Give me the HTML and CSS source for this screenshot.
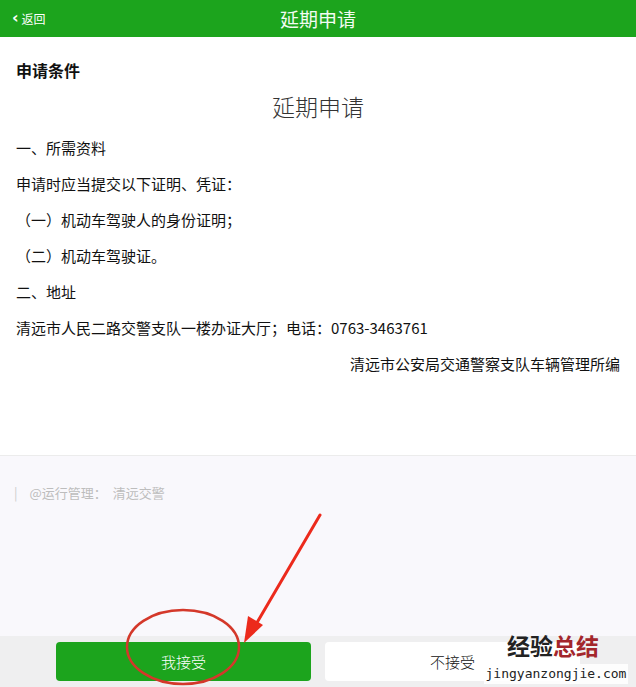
FILE: index.html
```html
<!DOCTYPE html>
<html lang="zh-CN">
<head>
<meta charset="utf-8">
<title>延期申请</title>
<link rel="stylesheet" href="styles.css">
</head>
<body>
<div class="page">
  <header class="topbar">
    <a class="back"><span class="chev">‹</span>返回</a>
    <h1 class="topbar-title">延期申请</h1>
  </header>
  <main class="article">
    <h2 class="section-title">申请条件</h2>
    <h3 class="doc-title">延期申请</h3>
    <p class="line">一、所需资料</p>
    <p class="line">申请时应当提交以下证明、凭证：</p>
    <p class="line">（一）机动车驾驶人的身份证明；</p>
    <p class="line">（二）机动车驾驶证。</p>
    <p class="line">二、地址</p>
    <p class="line">清远市人民二路交警支队一楼办证大厅；电话：0763-3463761</p>
    <p class="line right">清远市公安局交通警察支队车辆管理所编</p>
  </main>
  <section class="meta">
    <span class="bar">|</span><span class="meta-label">@运行管理：</span><span class="meta-name">清远交警</span>
  </section>
  <footer class="actions">
    <button class="btn btn-primary">我接受</button>
    <button class="btn btn-plain">不接受</button>
  </footer>

  <svg class="annot" width="636" height="687" viewBox="0 0 636 687">
    <ellipse cx="183" cy="647" rx="56" ry="37" fill="none" stroke="#d4382a" stroke-width="2.5"/>
    <line x1="320" y1="515" x2="255" y2="626" stroke="#ec2a1c" stroke-width="3" stroke-linecap="round"/>
    <polygon points="244,643 248,616 263,625" fill="#ec2a1c"/>
  </svg>

  <div class="watermark">
    <div class="wm-cn"><span class="wm-dark">经验</span><span class="wm-red">总结</span></div>
    <div class="wm-en">jingyanzongjie.com</div>
  </div>
</div>
</body>
</html>
```

FILE: styles.css
```css
* { box-sizing: border-box; }
html, body { margin: 0; padding: 0; }
body {
  width: 636px;
  height: 687px;
  overflow: hidden;
  font-family: "Noto Sans CJK SC", "Liberation Sans", sans-serif;
  color: #222;
  background: #fff;
}
.page {
  position: relative;
  width: 636px;
  height: 687px;
  display: flex;
  flex-direction: column;
}
.topbar {
  height: 37px;
  background: #1ca41d;
  display: flex;
  align-items: center;
  justify-content: center;
  position: relative;
}
.back {
  position: absolute;
  left: 12px;
  top: 0;
  height: 37px;
  display: flex;
  align-items: center;
  color: #fff;
  font-size: 12px;
  gap: 3px;
}
.chev { font-size: 16px; line-height: 1; margin-top: -2px; font-family: "DejaVu Sans", sans-serif; font-weight: bold; }
.topbar-title {
  margin: 0;
  color: #f2fbf2;
  font-size: 19px;
  font-weight: normal;
}
.article {
  height: 419px;
  padding: 23px 16px 0 16px;
  border-bottom: 1px solid #ececec;
}
.section-title {
  margin: 0;
  font-size: 16px;
  line-height: 20px;
  font-weight: bold;
  color: #111;
}
.doc-title {
  margin: 11px 0 0;
  text-align: center;
  font-size: 23px;
  line-height: 30px;
  font-weight: 300;
  color: #333;
}
.line {
  margin: 16px 0 0;
  font-size: 15px;
  line-height: 20px;
  color: #111;
}
.doc-title + .line { margin-top: 17px; }
.right { text-align: right; }
.meta {
  height: 180px;
  background: #f9f8fc;
  padding: 27px 0 0 14px;
  font-size: 13px;
  line-height: 20px;
  color: #bdbdbd;
}
.bar { margin-right: 12px; color: #ccc; }
.meta-label { margin-right: 6px; }
.actions {
  height: 51px;
  background: #efeff0;
  display: flex;
  gap: 14px;
  padding: 6px 56px 0;
}
.btn {
  width: 255px;
  height: 39px;
  border: none;
  border-radius: 4px;
  font-family: "Noto Sans CJK SC", sans-serif;
  font-size: 15px;
  font-weight: 300;
}
.btn-primary { background: #1ca41d; color: #fff; }
.btn-plain { background: #fff; color: #111; }
.annot {
  position: absolute;
  left: 0;
  top: 0;
  pointer-events: none;
}
.watermark {
  position: absolute;
  right: 2px;
  bottom: 2px;
  width: 156px;
  height: 54px;
  text-align: center;
}
.wm-cn {
  font-size: 23px;
  font-weight: bold;
  line-height: 28px;
  padding-right: 6px;
}
.wm-dark { color: #222; }
.wm-red { color: #a3262c; }
.wm-en {
  display: inline-block;
  background: rgba(255,255,255,0.85);
  font-family: "DejaVu Sans Mono", monospace;
  font-size: 13px;
  line-height: 20px;
  color: #222;
  padding: 0 2px;
}
```
